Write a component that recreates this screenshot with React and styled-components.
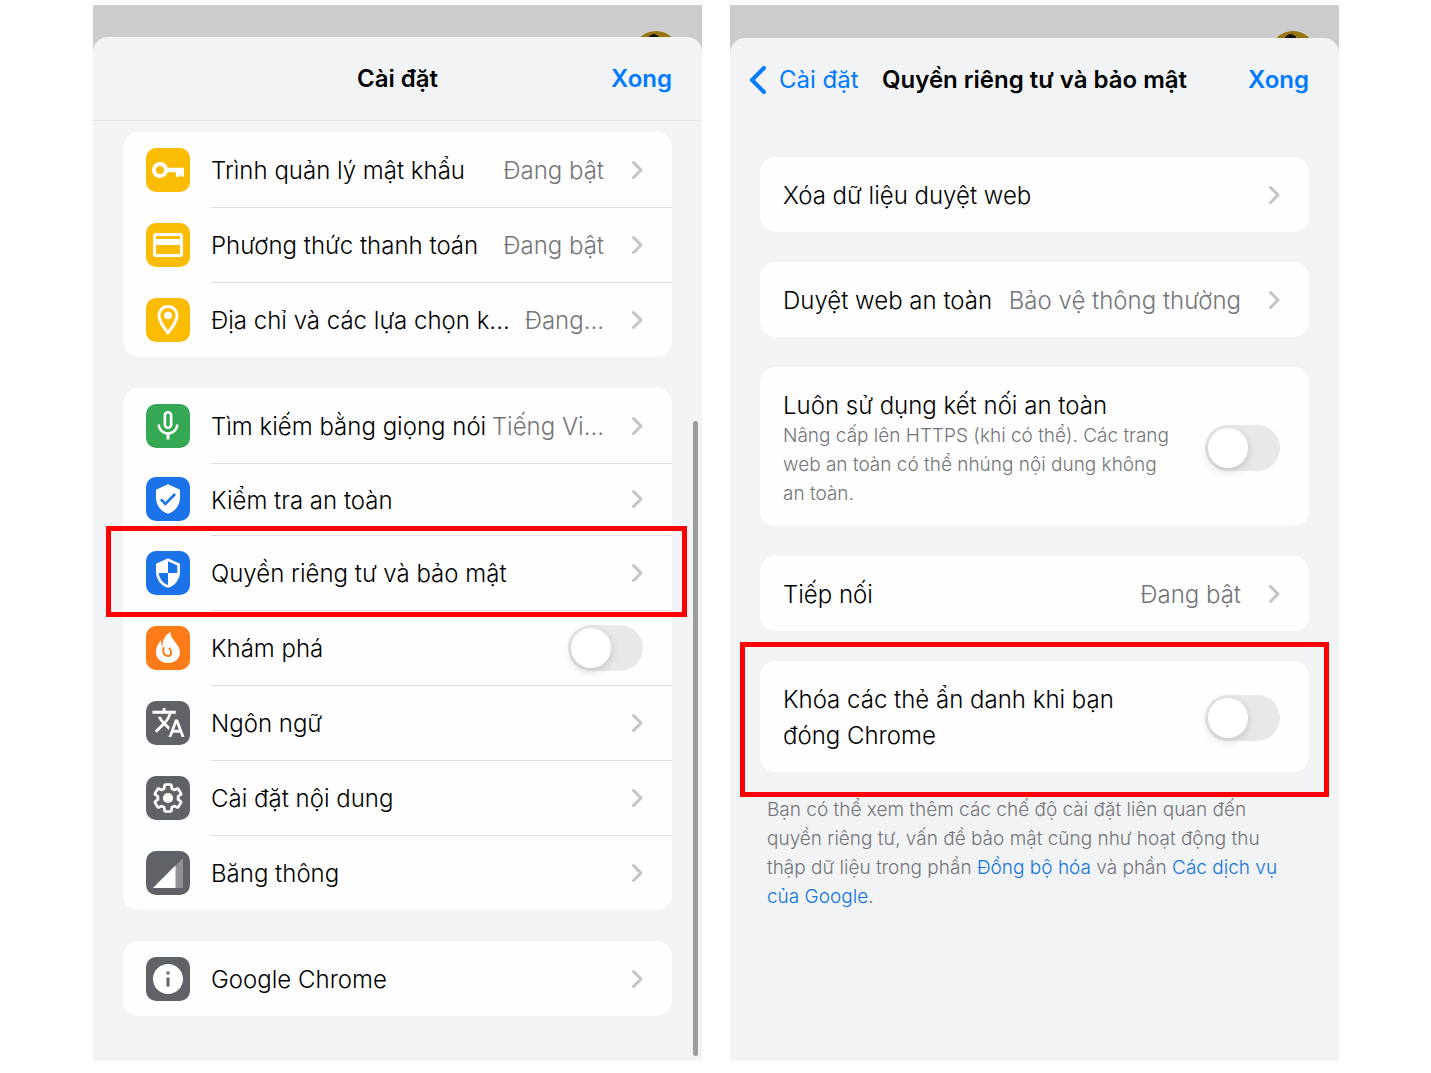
import { useState } from "react";
import styled, { createGlobalStyle } from "styled-components";
import {
    MdInfo,
    MdMicNone,
    MdOutlineCreditCard,
    MdOutlineLocationOn,
    MdTranslate,
    MdVerifiedUser,
} from "react-icons/md";

function KeyIcon() {
    return (
        <svg width="44" height="44" viewBox="0 0 44 44" fill="currentColor" aria-hidden="true">
            <path
                fillRule="evenodd"
                d="M14 14a8 8 0 0 1 7.6 5.7H38v9h-2.3l-1-2.2-1.2 2.2h-3.6v-4.4h-8.3A8 8 0 1 1 14 14zm0 4a4 4 0 1 0 0 8 4 4 0 0 0 0-8z"
            />
        </svg>
    );
}

function ShieldIcon() {
    return (
        <svg width="32" height="32" viewBox="0 0 24 24" fill="currentColor" aria-hidden="true">
            <path
                fillRule="evenodd"
                d="M12 1l9 4v6c0 5.55-3.84 10.74-9 12-5.16-1.26-9-6.45-9-12V5l9-4zm0 2.2V12h7V6.3l-7-3.1zM12 12H5c.53 4.12 3.28 7.79 7 8.94V12z"
            />
        </svg>
    );
}

function FlameIcon() {
    return (
        <svg width="44" height="44" viewBox="0 0 44 44" aria-hidden="true">
            <path
                fill="currentColor"
                d="M24.5 6c-.4 7.500 9.500 12 9.500 20.500C34 32.500 29 37 22 37s-12-4.500-12-11c0-4.500 2-8.500 5-12 0 3 .2 5 1.400 6.500C16.500 14 19 9 24.500 6z"
            />
            <path
                fill="none"
                stroke="#fa7b17"
                strokeWidth="2"
                strokeLinecap="round"
                d="M17.500 22c-1 4.500.8 8 4.200 8 3.500 0 4.800-3.500 1.800-7.500"
            />
        </svg>
    );
}

function GearIcon() {
    return (
        <svg width="36" height="36" viewBox="0 0 24 24" aria-hidden="true">
            <g transform="translate(1.2 1.2) scale(.9)" fill="none" stroke="currentColor" strokeWidth="2" strokeLinejoin="round">
                <path d="M19.43 12.98c.04-.32.07-.64.07-.98s-.03-.66-.07-.98l2.11-1.65c.19-.15.24-.42.12-.64l-2-3.46c-.12-.22-.39-.3-.61-.22l-2.49 1c-.52-.4-1.08-.73-1.69-.98l-.38-2.65C14.46 2.18 14.25 2 14 2h-4c-.25 0-.46.18-.49.42l-.38 2.65c-.61.25-1.17.59-1.69.98l-2.49-1c-.23-.09-.49 0-.61.22l-2 3.46c-.13.22-.07.49.12.64l2.11 1.65c-.04.32-.07.65-.07.98s.03.66.07.98l-2.11 1.65c-.19.15-.24.42-.12.64l2 3.46c.12.22.39.3.61.22l2.49-1c.52.4 1.08.73 1.69.98l.38 2.65c.03.24.24.42.49.42h4c.25 0 .46-.18.49-.42l.38-2.65c.61-.25 1.17-.59 1.69-.98l2.49 1c.23.09.49 0 .61-.22l2-3.46c.12-.22.07-.49-.12-.64l-2.11-1.65z" />
            </g>
            <circle cx="12" cy="12" r="3.4" fill="currentColor" />
        </svg>
    );
}

function SignalIcon() {
    return (
        <svg width="36" height="36" viewBox="0 0 24 24" fill="currentColor" aria-hidden="true">
            <path fillOpacity=".3" d="M2 22h20V2z" />
            <path d="M17 7L2 22h15z" />
        </svg>
    );
}

function Chevron() {
    return (
        <ChevronSvg width="12" height="20" viewBox="0 0 12 20" aria-hidden="true">
            <path d="M2.5 2.500l7.500 7.500-7.500 7.500" />
        </ChevronSvg>
    );
}

function Switch({ id }) {
    const [on, setOn] = useState(false);
    return <Toggle id={id} type="checkbox" role="switch" checked={on} onChange={() => setOn(!on)} />;
}

const passwords = [
    { label: "Trình quản lý mật khẩu", value: "Đang bật", color: "#fbbc04", icon: <KeyIcon /> },
    { label: "Phương thức thanh toán", value: "Đang bật", color: "#fbbc04", icon: <MdOutlineCreditCard size={36} /> },
    { label: "Địa chỉ và các lựa chọn k...", value: "Đang...", color: "#fbbc04", icon: <MdOutlineLocationOn size={36} /> },
];

const features = [
    { label: "Tìm kiếm bằng giọng nói", value: "Tiếng Vi...", color: "#34a853", icon: <MdMicNone size={36} /> },
    { label: "Kiểm tra an toàn", color: "#1a73e8", icon: <MdVerifiedUser size={32} />, compact: true },
    { label: "Quyền riêng tư và bảo mật", color: "#1a73e8", icon: <ShieldIcon />, marked: true },
    { label: "Khám phá", color: "#fa7b17", icon: <FlameIcon />, toggle: "discover" },
    { label: "Ngôn ngữ", color: "#5f6368", icon: <MdTranslate size={35} /> },
    { label: "Cài đặt nội dung", color: "#5f6368", icon: <GearIcon /> },
    { label: "Băng thông", color: "#5f6368", icon: <SignalIcon /> },
];

const about = [{ label: "Google Chrome", color: "#5f6368", icon: <MdInfo size={36} /> }];

function SettingsCard({ items }) {
    return (
        <Card>
            {items.map((item) => (
                <Row key={item.label} $compact={item.compact}>
                    <Tile $color={item.color}>{item.icon}</Tile>
                    <RowBody>
                        {item.toggle ? (
                            <Label as="label" htmlFor={item.toggle}>{item.label}</Label>
                        ) : (
                            <Label>{item.label}</Label>
                        )}
                        {item.value && <Value>{item.value}</Value>}
                        {item.toggle ? <Switch id={item.toggle} /> : <Chevron />}
                    </RowBody>
                    {item.marked && <RowMark />}
                </Row>
            ))}
        </Card>
    );
}

function SettingsScreen() {
    return (
        <Phone>
            <Backdrop $height={32}>
                <Avatar />
            </Backdrop>
            <Sheet>
                <Header $line>
                    <span />
                    <Title>Cài đặt</Title>
                    <Done type="button">Xong</Done>
                </Header>
                <Content $top={11} $gap={31}>
                    <SettingsCard items={passwords} />
                    <SettingsCard items={features} />
                    <SettingsCard items={about} />
                </Content>
            </Sheet>
            <ScrollThumb />
        </Phone>
    );
}

function PrivacyScreen() {
    return (
        <Phone>
            <Backdrop $height={33}>
                <Avatar />
            </Backdrop>
            <Sheet>
                <Header>
                    <Back type="button">
                        <svg width="17" height="28" viewBox="0 0 17 28" aria-hidden="true">
                            <path d="M15 2L3 14l12 12" />
                        </svg>
                        Cài đặt
                    </Back>
                    <Title>Quyền riêng tư và bảo mật</Title>
                    <Done type="button">Xong</Done>
                </Header>
                <Content $top={35} $gap={30}>
                    <Card>
                        <PlainRow>
                            <Label>Xóa dữ liệu duyệt web</Label>
                            <Chevron />
                        </PlainRow>
                    </Card>
                    <Card>
                        <PlainRow>
                            <Label>Duyệt web an toàn</Label>
                            <Value>Bảo vệ thông thường</Value>
                            <Chevron />
                        </PlainRow>
                    </Card>
                    <Card>
                        <TextRow>
                            <TextBlock>
                                <WrapLabel htmlFor="https">Luôn sử dụng kết nối an toàn</WrapLabel>
                                <Hint>Nâng cấp lên HTTPS (khi có thể). Các trang web an toàn có thể nhúng nội dung không an toàn.</Hint>
                            </TextBlock>
                            <Switch id="https" />
                        </TextRow>
                    </Card>
                    <Card>
                        <PlainRow>
                            <Label>Tiếp nối</Label>
                            <Value>Đang bật</Value>
                            <Chevron />
                        </PlainRow>
                    </Card>
                    <div>
                        <Card>
                            <TextRow>
                                <TextBlock>
                                    <WrapLabel htmlFor="incognito">Khóa các thẻ ẩn danh khi bạn đóng Chrome</WrapLabel>
                                </TextBlock>
                                <Switch id="incognito" />
                            </TextRow>
                            <CardMark />
                        </Card>
                        <Footnote>
                            Bạn có thể xem thêm các chế độ cài đặt liên quan đến quyền riêng tư, vấn đề bảo mật cũng như hoạt động thu
                            thập dữ liệu trong phần <a href="#sync">Đồng bộ hóa</a> và phần <a href="#services">Các dịch vụ của Google</a>.
                        </Footnote>
                    </div>
                </Content>
            </Sheet>
        </Phone>
    );
}

export default function App() {
    return (
        <>
            <GlobalStyle />
            <Page>
                <SettingsScreen />
                <PrivacyScreen />
            </Page>
        </>
    );
}

const GlobalStyle = createGlobalStyle`
    * {
        box-sizing: border-box;
    }
    body {
        margin: 0;
        background: #ffffff;
        color: #000000;
        font-family: Inter, "Liberation Sans", sans-serif;
        font-size: 24px;
    }
    button {
        font: inherit;
        border: 0;
        padding: 0;
        background: none;
        cursor: pointer;
    }
    p, h1 {
        margin: 0;
    }
`;

const Page = styled.main`
    display: grid;
    grid-template-columns: 1fr 1fr;
    gap: 28px;
    padding: 5px 92px 12px 93px;
`;

const Phone = styled.section`
    position: relative;
    display: flex;
    flex-direction: column;
    min-width: 0;
    background: #cccccc;
`;

const Backdrop = styled.div`
    display: flex;
    justify-content: flex-end;
    height: ${(props) => props.$height}px;
    padding: 26px 23px 0 0;
`;

const Avatar = styled.div`
    flex: none;
    width: 46px;
    height: 46px;
    border-radius: 50%;
    background: radial-gradient(ellipse 6px 5px at 45% 8px, #14120a 90%, #94750f);
`;

const Sheet = styled.div`
    position: relative;
    flex: 1;
    border-radius: 15px 15px 0 0;
    background: #f2f3f5;
`;

const Header = styled.header`
    display: grid;
    grid-template-columns: 1fr auto 1fr;
    align-items: center;
    height: 84px;
    padding: 0 30px;
    border-bottom: 1px solid ${(props) => (props.$line ? "#e3e4e7" : "transparent")};
`;

const Title = styled.h1`
    font-size: 24px;
    font-weight: 600;
    white-space: nowrap;
`;

const Done = styled.button`
    justify-self: end;
    color: #007aff;
    font-weight: 600;
`;

const Back = styled.button`
    display: flex;
    align-items: center;
    gap: 13px;
    margin-left: -11px;
    color: #007aff;
    white-space: nowrap;

    svg {
        flex: none;
        fill: none;
        stroke: currentColor;
        stroke-width: 4;
        stroke-linecap: round;
        stroke-linejoin: round;
    }
`;

const Content = styled.div`
    display: flex;
    flex-direction: column;
    gap: ${(props) => props.$gap}px;
    padding: ${(props) => props.$top}px 30px 45px;
`;

const Card = styled.div`
    position: relative;
    border-radius: 15px;
    background: #fefefe;
`;

const Row = styled.div`
    position: relative;
    display: flex;
    align-items: center;
    gap: 21px;
    height: ${(props) => (props.$compact ? 72 : 75)}px;
    padding-left: 23px;
`;

const RowBody = styled.div`
    display: flex;
    flex: 1;
    align-items: center;
    align-self: stretch;
    min-width: 0;
    padding-right: 29px;

    ${Row}:not(:last-child) & {
        box-shadow: 0 1px 0 #dddee0;
    }
`;

const Tile = styled.span`
    display: flex;
    flex: none;
    align-items: center;
    justify-content: center;
    width: 44px;
    height: 44px;
    border-radius: 10px;
    background: ${(props) => props.$color};
    color: #ffffff;
`;

const Label = styled.span`
    padding-top: 2px;
    font-weight: 350;
    white-space: nowrap;
`;

const Value = styled.span`
    margin-left: auto;
    padding-top: 2px;
    color: #747579;
    font-weight: 350;
    white-space: nowrap;
`;

const ChevronSvg = styled.svg`
    flex: none;
    margin-left: auto;
    fill: none;
    stroke: #c3c4c7;
    stroke-width: 3;
    stroke-linecap: round;
    stroke-linejoin: round;

    ${Value} + & {
        margin-left: 27px;
    }
`;

const Toggle = styled.input`
    flex: none;
    width: 75px;
    height: 46px;
    margin: 0 0 0 auto;
    padding: 3px;
    appearance: none;
    border-radius: 23px;
    background: ${(props) => (props.checked ? "#34c759" : "#e8e8ea")};
    cursor: pointer;

    &::before {
        content: "";
        display: block;
        width: 40px;
        height: 40px;
        margin-left: ${(props) => (props.checked ? 29 : 0)}px;
        border-radius: 50%;
        background: #ffffff;
        box-shadow: 0 3px 10px rgba(0, 0, 0, 0.16);
    }
`;

const PlainRow = styled.div`
    display: flex;
    align-items: center;
    height: 75px;
    padding: 0 29px 0 23px;
`;

const TextRow = styled.div`
    display: flex;
    align-items: center;
    gap: 30px;
    padding: 21px 29px 18px 23px;
`;

const TextBlock = styled.div`
    flex: 1;
    min-width: 0;
`;

const WrapLabel = styled.label`
    display: block;
    font-weight: 350;
    line-height: 36px;
`;

const Hint = styled.p`
    margin-top: -3px;
    color: #747579;
    font-size: 19px;
    font-weight: 350;
    line-height: 29px;
`;

const Footnote = styled.p`
    padding: 23px 7px 0;
    color: #747579;
    font-size: 19px;
    font-weight: 350;
    line-height: 29px;

    a {
        color: #0f73e0;
        text-decoration: none;
    }
`;

const Mark = styled.div`
    position: absolute;
    z-index: 1;
    border: 5px solid #ff0000;
    pointer-events: none;
`;

const RowMark = styled(Mark)`
    inset: -9px -15px -7px -17px;
`;

const CardMark = styled(Mark)`
    inset: -19px -20px -25px;
`;

const ScrollThumb = styled.div`
    position: absolute;
    top: 416px;
    right: 4px;
    bottom: 5px;
    width: 5px;
    border-radius: 3px;
    background: #9b9c9f;
`;
